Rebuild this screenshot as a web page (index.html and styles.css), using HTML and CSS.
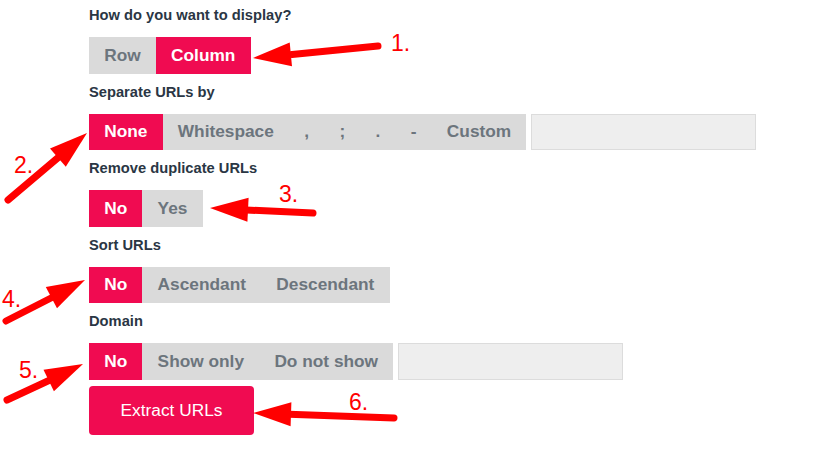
FILE: index.html
```html
<!DOCTYPE html>
<html lang="en">
<head>
    <meta charset="UTF-8">
    <meta name="viewport" content="width=device-width, initial-scale=1.0">
    <title>Extract URLs</title>
    <link rel="stylesheet" href="styles.css">
</head>
<body>

<div class="page">
    <div class="options">
        <p class="label first">How do you want to display?</p>
        <div class="line">
            <div class="seg">
                <span class="opt">Row</span>
                <span class="opt active">Column</span>
            </div>
        </div>

        <p class="label">Separate URLs by</p>
        <div class="line">
            <div class="seg">
                <span class="opt active">None</span>
                <span class="opt">Whitespace</span>
                <span class="opt">,</span>
                <span class="opt">;</span>
                <span class="opt">.</span>
                <span class="opt">-</span>
                <span class="opt">Custom</span>
            </div>
            <input class="field" type="text">
        </div>

        <p class="label">Remove duplicate URLs</p>
        <div class="line">
            <div class="seg">
                <span class="opt active">No</span>
                <span class="opt">Yes</span>
            </div>
        </div>

        <p class="label">Sort URLs</p>
        <div class="line">
            <div class="seg">
                <span class="opt active">No</span>
                <span class="opt">Ascendant</span>
                <span class="opt">Descendant</span>
            </div>
        </div>

        <p class="label">Domain</p>
        <div class="line">
            <div class="seg">
                <span class="opt active">No</span>
                <span class="opt">Show only</span>
                <span class="opt">Do not show</span>
            </div>
            <input class="field" type="text">
        </div>

        <button class="extract">Extract URLs</button>
    </div>

    <!-- annotation arrows -->
    <svg class="notes" width="840" height="456" viewBox="0 0 840 456">
        <g stroke="#ff0000" stroke-width="7" stroke-linecap="round">
            <line x1="378" y1="46" x2="292" y2="54.5"/>
            <line x1="8" y1="200" x2="60" y2="156"/>
            <line x1="313" y1="213" x2="246" y2="210"/>
            <line x1="6" y1="321" x2="53" y2="297"/>
            <line x1="7" y1="400" x2="50" y2="380"/>
            <line x1="394" y1="418" x2="289" y2="414.3"/>
        </g>
        <g fill="#ff0000">
            <polygon points="253,58 289.7,42.5 292,66.3"/>
            <polygon points="87,133 50,148.5 65.8,166.7"/>
            <polygon points="210,208 248.6,197.8 247.4,221.8"/>
            <polygon points="85,280 45.8,287.1 57,308.3"/>
            <polygon points="83,364 43.5,369.7 53.9,391.3"/>
            <polygon points="253,413 291.4,402.3 290.6,426.3"/>
        </g>
        <g class="num">
            <text x="391" y="51">1.</text>
            <text x="14" y="173">2.</text>
            <text x="279" y="202">3.</text>
            <text x="2" y="307">4.</text>
            <text x="19" y="378">5.</text>
            <text x="349" y="410">6.</text>
        </g>
    </svg>
</div>

</body>
</html>
```

FILE: styles.css
```css
body {
    margin: 0;
    font-family: "Liberation Sans", Arial, sans-serif;
    background: #ffffff;
}

.page {
    position: relative;
    width: 840px;
    height: 456px;
    overflow: hidden;
}

.options {
    padding-left: 89px;
    display: flex;
    flex-direction: column;
    align-items: flex-start;
}

/* Section titles */
.label {
    margin: 8px 0 12px;
    font-size: 14.7px;
    line-height: 20px;
    font-weight: bold;
    color: #2a3644;
}

.label.first {
    margin-top: 5px;
}

.line {
    display: flex;
    gap: 5px;
}

/* Segmented buttons */
.seg {
    display: flex;
    height: 36.5px;
    background: #dadada;
}

.opt {
    display: flex;
    align-items: center;
    padding: 0 15.2px;
    font-size: 17.3px;
    font-weight: bold;
    color: #6c757d;
}

.opt.active {
    background: #f00b51;
    color: #ffffff;
}

.field {
    box-sizing: border-box;
    width: 225px;
    height: 36.5px;
    margin: 0;
    background: #eeeeee;
    border: 1px solid #dcdcdc;
}

.extract {
    margin-top: 6.5px;
    width: 165px;
    height: 49px;
    border: none;
    border-radius: 4px;
    background: #f00b51;
    color: #ffffff;
    font-family: "Liberation Sans", Arial, sans-serif;
    font-size: 17.3px;
}

/* Annotation layer */
.notes {
    position: absolute;
    top: 0;
    left: 0;
    pointer-events: none;
}

.num text {
    fill: #ff0000;
    font-family: "Liberation Sans", Arial, sans-serif;
    font-size: 23px;
}
```
